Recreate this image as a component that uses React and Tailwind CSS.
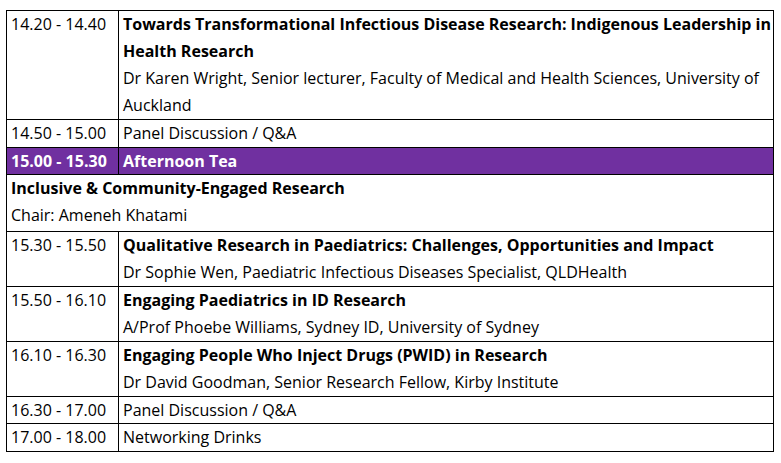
import React from 'react'

const rows = [
  {
    time: '14.20 - 14.40',
    title: ['Towards Transformational Infectious Disease Research: Indigenous Leadership in', 'Health Research'],
    sub: ['Dr Karen Wright, Senior lecturer, Faculty of Medical and Health Sciences, University of', 'Auckland'],
  },
  { time: '14.50 - 15.00', plain: 'Panel Discussion / Q&A' },
  { time: '15.00 - 15.30', plain: 'Afternoon Tea', highlight: true },
  { section: 'Inclusive & Community-Engaged Research', chair: 'Chair: Ameneh Khatami' },
  {
    time: '15.30 - 15.50',
    title: ['Qualitative Research in Paediatrics: Challenges, Opportunities and Impact'],
    sub: ['Dr Sophie Wen, Paediatric Infectious Diseases Specialist, QLDHealth'],
  },
  {
    time: '15.50 - 16.10',
    title: ['Engaging Paediatrics in ID Research'],
    sub: ['A/Prof Phoebe Williams, Sydney ID, University of Sydney'],
  },
  {
    time: '16.10 - 16.30',
    title: ['Engaging People Who Inject Drugs (PWID) in Research'],
    sub: ['Dr David Goodman, Senior Research Fellow, Kirby Institute'],
  },
  { time: '16.30 - 17.00', plain: 'Panel Discussion / Q&A', short: true },
  { time: '17.00 - 18.00', plain: 'Networking Drinks' },
]

function Row({ row, first }) {
  const top = first ? '' : 'border-t border-black'

  if (row.section) {
    return (
      <div className={`${top} px-[4px] pb-[2px]`}>
        <p className="font-bold">{row.section}</p>
        <p>{row.chair}</p>
      </div>
    )
  }

  const tight = row.highlight || row.short

  return (
    <div
      className={`${top} grid grid-cols-[111px_1fr] ${tight ? 'h-[27px] leading-[26px]' : ''} ${row.highlight ? 'bg-[#7030a0] text-white font-bold' : ''}`}
    >
      <div className="px-[4px]">{row.time}</div>
      <div className="border-l border-black px-[4px]">
        {row.plain && <p>{row.plain}</p>}
        {row.title && row.title.map(t => <p key={t} className="font-bold">{t}</p>)}
        {row.sub && row.sub.map(t => <p key={t}>{t}</p>)}
      </div>
    </div>
  )
}

export default function App() {
  return (
    <div className="w-[781px] h-[463px] bg-white pt-[10px] pl-[6px]"
      style={{ fontFamily: '"Open Sans", "Noto Sans", sans-serif' }}>
      <div className="w-[768px] border border-black text-[16px] leading-[27px] text-black whitespace-nowrap">
        {rows.map((r, i) => (
          <Row key={i} row={r} first={i === 0} />
        ))}
      </div>
    </div>
  )
}
